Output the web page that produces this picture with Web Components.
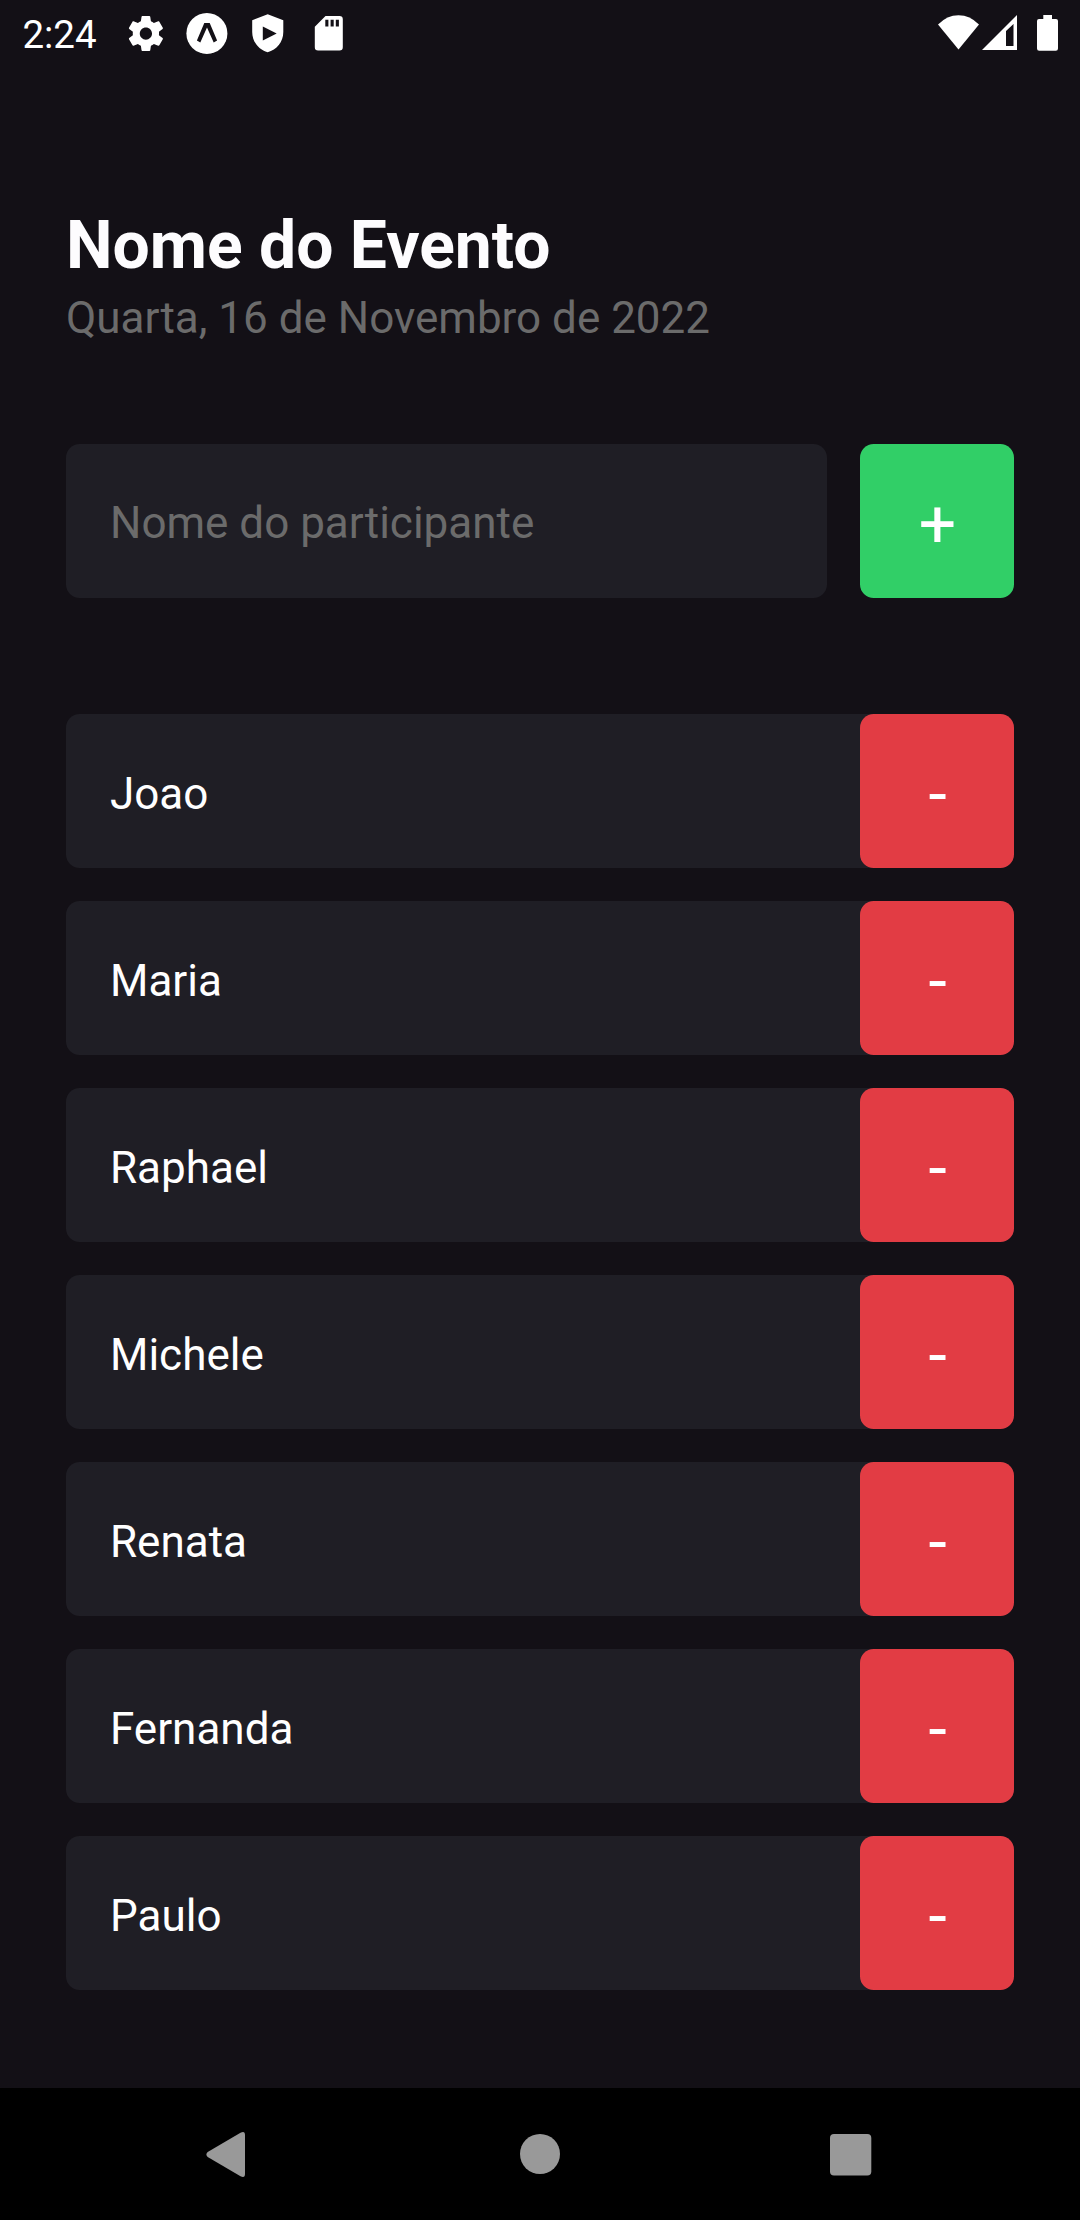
<!DOCTYPE html>
<html lang="pt-BR">
<head>
<meta charset="utf-8">
<title>Nome do Evento</title>
<style>
html,body{margin:0;padding:0;background:#131016}
body{font-family:Roboto,"Liberation Sans",sans-serif;width:1080px;height:2220px;overflow:hidden}
</style>
</head>
<body>
<event-app></event-app>
<script>
const define = (name, html) => {
  const template = document.createElement('template');
  template.innerHTML = html;
  customElements.define(name, class extends HTMLElement {
    constructor() {
      super();
      this.attachShadow({ mode: 'open' }).append(template.content.cloneNode(true));
    }
  });
};

define('status-bar', `
<style>
:host{display:flex;justify-content:space-between;height:67px;box-sizing:border-box;padding:0 21px 0 22.4px;color:#fff}
.side{display:flex;align-items:flex-start}
time{font-size:38.5px;line-height:45px;margin-top:12px;width:102.6px;white-space:nowrap}
svg{display:block;fill:#fff;height:67px}
</style>
<div class="side">
  <time>2:24</time>
  <svg width="42" viewBox="125.5 0 42 67"><path transform="translate(125.4 12.5) scale(1.75)" d="M19.43 12.98c.04-.32.07-.64.07-.98s-.03-.66-.07-.98l2.11-1.65c.19-.15.24-.42.12-.64l-2-3.46c-.12-.22-.39-.3-.61-.22l-2.49 1c-.52-.4-1.08-.73-1.69-.98l-.38-2.65C14.46 2.18 14.25 2 14 2h-4c-.25 0-.46.18-.49.42l-.38 2.65c-.61.25-1.17.59-1.69.98l-2.49-1c-.23-.09-.49 0-.61.22l-2 3.46c-.13.22-.07.49.12.64l2.11 1.65c-.04.32-.07.65-.07.98s.03.66.07.98l-2.11 1.65c-.19.15-.24.42-.12.64l2 3.46c.12.22.39.3.61.22l2.49-1c.52.4 1.08.73 1.69.98l.38 2.65c.03.24.24.42.49.42h4c.25 0 .46-.18.49-.42l.38-2.65c.61-.25 1.17-.59 1.69-.98l2.49 1c.23.09.49 0 .61-.22l2-3.46c.12-.22.07-.49-.12-.64l-2.11-1.65zM12 15.5c-1.93 0-3.5-1.57-3.5-3.5s1.57-3.5 3.5-3.5 3.5 1.57 3.5 3.5-1.57 3.5-3.5 3.5z"/></svg>
  <svg width="61" viewBox="167.5 0 61 67"><circle cx="207.4" cy="33.4" r="20.5"/><path fill="#131016" d="M204.8 23H210.2L217.6 40.6L214.2 42.6L207.5 27.6L200.8 42.6L197.4 40.6Z"/></svg>
  <svg width="61" viewBox="228.5 0 61 67"><path fill-rule="evenodd" d="M268.2 14.3L283.8 20.3V32C283.8 42 277 49.8 268.2 52.3C259.500 49.800 252.700 42 252.700 32V20.300ZM263.300 26.400V40.400L277.200 33.400Z"/></svg>
  <svg width="61" viewBox="289.5 0 61 67"><path fill-rule="evenodd" d="M326 16H340Q343.300 16 343.300 19.300V47.300Q343.300 50.600 340 50.600H318.600Q315.300 50.600 315.300 47.300V26.700ZM325.800 19.700V26.500H328.900V19.700ZM331.100 19.700V26.500H334.200V19.700ZM336.300 19.700V26.500H339.400V19.700Z"/></svg>
</div>
<div class="side">
  <svg width="44" viewBox="936 0 44 67"><path d="M938 24.500Q947 15.200 958.500 15.200T979 24.500L958.500 49.500Z"/></svg>
  <svg width="50" viewBox="980 0 50 67"><path fill-rule="evenodd" d="M982 50L1017 15V50ZM1006 31V46H1013.500V24Z"/></svg>
  <svg width="29" viewBox="1030 0 29 67"><path d="M1043.300 15H1052V19H1056Q1058 19 1058 21V48.500Q1058 50.700 1055.800 50.700H1039.200Q1037 50.700 1037 48.500V21Q1037 19 1039 19H1043.300Z"/></svg>
</div>`);

define('event-header', `
<style>
:host{display:block}
h1{margin:0;font-size:66px;line-height:78px;font-weight:700;color:#fdfcfe}
p{margin:0;font-size:44px;line-height:52px;color:#6b6b6b;padding-top:7px}
</style>
<h1><slot name="title"></slot></h1><p><slot name="date"></slot></p>`);

define('action-button', `
<style>
:host{display:block;width:154px;height:154px;flex:none}
button{display:flex;align-items:center;justify-content:center;box-sizing:border-box;width:100%;height:100%;margin:0;padding:7px 0 0 1px;border:0;border-radius:13.75px;background:var(--button-color,#e23c44);color:#fff;font:400 66px/78px Roboto,"Liberation Sans",sans-serif}
</style>
<button type="button"><slot></slot></button>`);

define('participant-form', `
<style>
:host{display:flex;gap:33px}
.field{flex:1;box-sizing:border-box;height:154px;padding:4px 44px 0;display:flex;align-items:center;border-radius:13.75px;background:#1f1e25;color:#6b6b6b;font-size:44px;line-height:52px}
action-button{--button-color:#31cf67}
</style>
<div class="field"><slot></slot></div><action-button>+</action-button>`);

define('participant-row', `
<style>
:host{display:flex;align-items:center;height:154px;border-radius:13.75px;background:#1f1e25;color:#fff;font-size:44px;line-height:52px}
.name{flex:1;padding-left:44px;padding-top:6px}
</style>
<span class="name"><slot></slot></span><action-button>-</action-button>`);

define('navigation-bar', `
<style>
:host{display:flex;justify-content:space-between;align-items:center;height:132px;box-sizing:border-box;padding:0 201px;background:#000}
svg{display:block;fill:#999}
</style>
<svg width="50" height="132" viewBox="201 2088 50 132"><path d="M240.500 2132.700Q245 2130.500 245 2135V2174Q245 2178.500 240.500 2176.300L207.700 2157Q205 2154.500 207.700 2152Z"/></svg>
<svg width="50" height="132" viewBox="515 2088 50 132"><circle cx="540" cy="2154" r="20"/></svg>
<svg width="50" height="132" viewBox="829 2088 50 132"><rect x="830" y="2134" width="41.300" height="41.500" rx="4"/></svg>`);

define('event-app', `
<style>
:host{display:flex;flex-direction:column;width:1080px;height:2220px;background:#131016}
main{flex:1;padding:140px 66px 0}
participant-form{margin-top:100px}
section{display:flex;flex-direction:column;gap:33px;margin-top:116px}
</style>
<status-bar></status-bar>
<main>
  <event-header><span slot="title">Nome do Evento</span><span slot="date">Quarta, 16 de Novembro de 2022</span></event-header>
  <participant-form>Nome do participante</participant-form>
  <section>
    <participant-row>Joao</participant-row>
    <participant-row>Maria</participant-row>
    <participant-row>Raphael</participant-row>
    <participant-row>Michele</participant-row>
    <participant-row>Renata</participant-row>
    <participant-row>Fernanda</participant-row>
    <participant-row>Paulo</participant-row>
  </section>
</main>
<navigation-bar></navigation-bar>`);
</script>
</body>
</html>
